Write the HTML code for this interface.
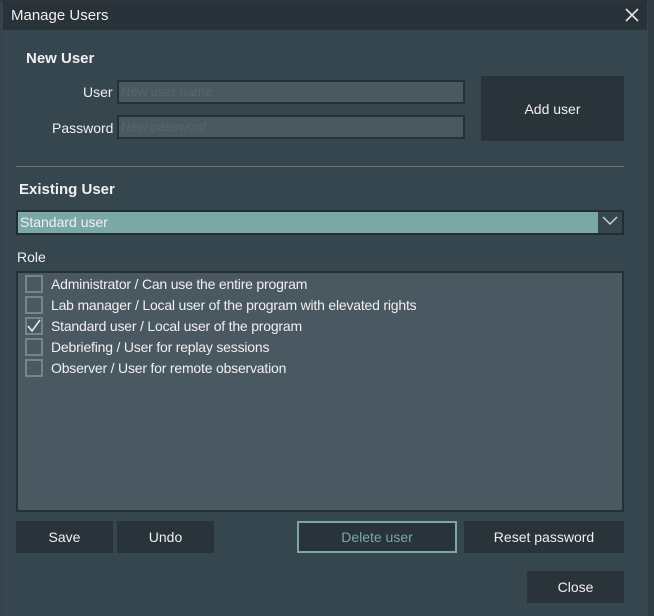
<!DOCTYPE html>
<html><head><meta charset="utf-8"><style>
*{margin:0;padding:0;box-sizing:border-box}
body{width:654px;height:616px;background:#35444c;font-family:"Liberation Sans",sans-serif;font-size:13.5px;color:#f0f0f0;position:relative;overflow:hidden}
.a{position:absolute}
.dlg{left:3px;top:1px;width:644px;height:615px;background:#36464f}
.title{left:3px;top:1px;width:644px;height:29px;background:#283238}
.inp{background:#4a5862;border:2px solid #253037}
.btn{background:#29333a;display:flex;align-items:center;justify-content:center;font-size:14px}
.cb{width:18px;height:18px;border:2px solid #76858c;left:25px}
.it{left:51px;font-size:14px;letter-spacing:-0.2px}
</style></head><body>
<div class="a" style="left:0;top:0;width:654px;height:2px;background:#2c363c"></div>
<div class="a" style="left:648px;top:0;width:6px;height:616px;background:#2f3b42"></div>
<div class="a dlg"></div>
<div class="a title"></div>
<div class="a" style="left:11px;top:7px;font-size:15px">Manage Users</div>
<svg class="a" style="left:625px;top:8px" width="14" height="14"><path d="M1 1L13 13M13 1L1 13" stroke="#e8e8e8" stroke-width="1.6"/></svg>
<div class="a" style="left:26px;top:50px;font-weight:bold;font-size:15px">New User</div>
<div class="a" style="left:83px;top:84px;font-size:14px">User</div>
<div class="a" style="left:52px;top:120px;font-size:14px">Password</div>
<div class="a inp" style="left:117px;top:80px;width:348px;height:24px;color:#56656e;font-size:13px;padding:2px 2px">New user name</div>
<div class="a inp" style="left:117px;top:115px;width:348px;height:24px;color:#56656e;font-size:13px;padding:2px 2px">New password</div>
<div class="a btn" style="left:481px;top:76px;width:143px;height:65px">Add user</div>
<div class="a" style="left:16px;top:166px;width:608px;height:1px;background:#6a7980"></div>
<div class="a" style="left:19px;top:181px;font-weight:bold;font-size:15px">Existing User</div>
<div class="a" style="left:16px;top:210px;width:608px;height:25px;background:#7aa8a4;border:2px solid #222c31;padding:2px 2px;font-size:14px">Standard user</div>
<div class="a" style="left:598px;top:212px;width:24px;height:21px;background:#36464f"></div>
<svg class="a" style="left:602px;top:216px" width="16" height="10"><path d="M1 1L8 8L15 1" stroke="#cfd6d9" stroke-width="1.4" fill="none"/></svg>
<div class="a" style="left:17px;top:249px;font-size:14px">Role</div>
<div class="a" style="left:16px;top:271px;width:608px;height:241px;background:#4a5862;border:2px solid #253037"></div>
<div class="a cb" style="top:275px"></div><div class="a it" style="top:276px">Administrator / Can use the entire program</div>
<div class="a cb" style="top:296px"></div><div class="a it" style="top:297px">Lab manager / Local user of the program with elevated rights</div>
<div class="a cb" style="top:317px"></div><div class="a it" style="top:318px">Standard user / Local user of the program</div>
<svg class="a" style="left:25px;top:317px" width="18" height="18"><path d="M3 9L7 14L15 3" stroke="#eee" stroke-width="1.5" fill="none"/></svg>
<div class="a cb" style="top:338px"></div><div class="a it" style="top:339px">Debriefing / User for replay sessions</div>
<div class="a cb" style="top:359px"></div><div class="a it" style="top:360px">Observer / User for remote observation</div>
<div class="a btn" style="left:16px;top:521px;width:97px;height:32px">Save</div>
<div class="a btn" style="left:117px;top:521px;width:97px;height:32px">Undo</div>
<div class="a btn" style="left:297px;top:521px;width:160px;height:32px;border:2px solid #7aa8a4;color:#7aa8a4">Delete user</div>
<div class="a btn" style="left:464px;top:521px;width:160px;height:32px">Reset password</div>
<div class="a btn" style="left:527px;top:571px;width:97px;height:32px">Close</div>
</body></html>
